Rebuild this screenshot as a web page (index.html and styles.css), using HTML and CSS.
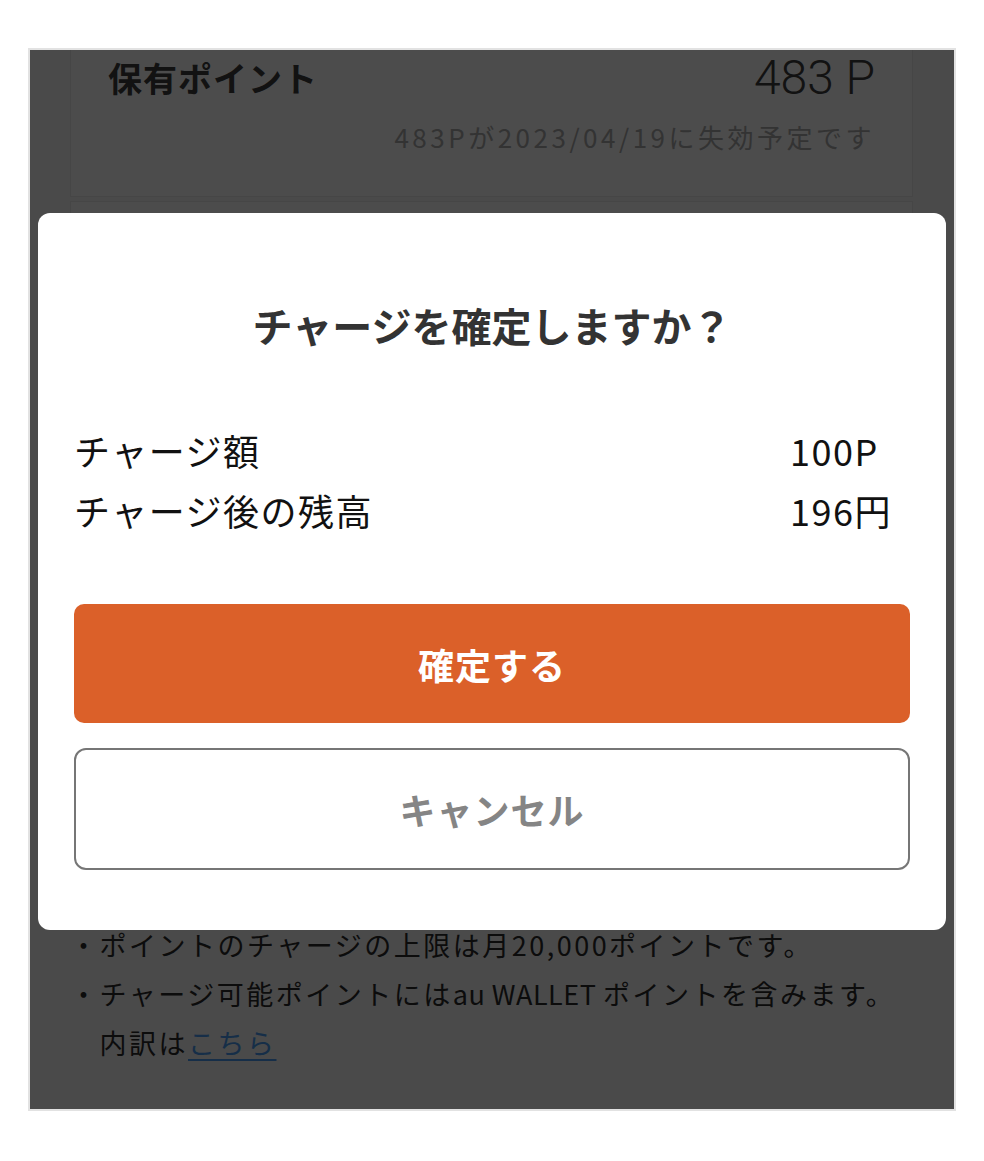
FILE: index.html
```html
<!DOCTYPE html>
<html lang="ja">
<head>
<meta charset="utf-8">
<title>チャージ確認</title>
<link rel="stylesheet" href="styles.css">
</head>
<body>
<div class="screen">
  <div class="page">
    <section class="card card-points">
      <div class="points-row">
        <span class="points-label">保有ポイント</span>
        <span class="points-value">483 P</span>
      </div>
      <p class="points-expire">483Pが2023/04/19に失効予定です</p>
    </section>
    <section class="card card-form"></section>
    <ul class="notes">
      <li>・ポイントのチャージの上限は月20,000ポイントです。</li>
      <li>・チャージ可能ポイントには<span class="latin">au WALLET </span>ポイントを含みます。<br>内訳は<a class="notes-link" href="#">こちら</a></li>
    </ul>
  </div>
  <div class="overlay">
    <div class="modal" role="dialog">
      <h2 class="modal-title">チャージを確定しますか？</h2>
      <div class="summary">
        <div class="summary-row"><span>チャージ額</span><span>100P</span></div>
        <div class="summary-row"><span>チャージ後の残高</span><span>196円</span></div>
      </div>
      <button class="btn btn-primary" type="button">確定する</button>
      <button class="btn btn-secondary" type="button">キャンセル</button>
    </div>
  </div>
</div>
</body>
</html>
```
FILE: styles.css
```css
* { box-sizing: border-box; }

body {
  margin: 0;
  background: #ffffff;
  font-family: "Noto Sans CJK JP", "Noto Sans", sans-serif;
  color: #333;
}

.screen {
  position: relative;
  margin: 48px 0 0 28px;
  width: 928px;
  height: 1063px;
  border: 2px solid #e2e2e2;
  background: #f7f7f8;
  overflow: hidden;
}

.page {
  padding: 0 41px 0 40px;
}

.card {
  background: #ffffff;
  border: 1px solid #ebebeb;
}

.card-points {
  border-top: none;
  padding: 0 37px 39px;
}

.points-row {
  display: flex;
  justify-content: space-between;
  align-items: flex-start;
  height: 56px;
}

.points-label {
  font-size: 34px;
  line-height: 56px;
  font-weight: 700;
  letter-spacing: 1px;
  color: #3c3c3c;
}

.points-value {
  font-family: Roboto, "Noto Sans CJK JP", sans-serif;
  font-size: 48px;
  line-height: 56px;
  font-weight: 300;
  color: #3c3c3c;
}

.points-expire {
  margin: 11px 0 0;
  text-align: right;
  font-size: 26px;
  line-height: 40px;
  letter-spacing: 3.5px;
  color: #ababab;
}

.card-form {
  margin-top: 4px;
  height: 700px;
}

.notes {
  list-style: none;
  margin: 19px 0 0;
  padding: 0;
  font-size: 27px;
  line-height: 49px;
  letter-spacing: 2.5px;
  color: #2b2b2b;
}

.notes li {
  white-space: nowrap;
  padding-left: 29.5px;
  text-indent: -29.5px;
}

.latin {
  letter-spacing: 0.5px;
}

.notes-link {
  color: #4a9cf0;
  text-decoration: underline;
  text-underline-offset: 5px;
}

.overlay {
  position: absolute;
  inset: 0;
  background: rgba(0, 0, 0, 0.7);
  padding: 163px 8px 0;
}

.modal {
  background: #ffffff;
  border-radius: 12px;
  padding: 85px 36px 60px;
}

.modal-title {
  margin: 0;
  text-align: center;
  font-size: 40px;
  line-height: 54px;
  font-weight: 700;
  color: #333;
}

.summary {
  margin-top: 68px;
}

.summary-row {
  display: grid;
  grid-template-columns: 1fr 120px;
  font-size: 36px;
  line-height: 60px;
  letter-spacing: 1.5px;
  color: #111;
}

.btn {
  display: flex;
  align-items: center;
  justify-content: center;
  width: 100%;
  padding: 0;
  font: inherit;
  font-size: 36px;
  font-weight: 700;
  letter-spacing: 1px;
  cursor: pointer;
}

.btn-primary {
  margin-top: 64px;
  height: 119px;
  border: none;
  border-radius: 10px;
  background: #db6029;
  color: #ffffff;
}

.btn-secondary {
  margin-top: 25px;
  height: 122px;
  border: 2px solid #767676;
  border-radius: 12px;
  background: #ffffff;
  color: #858585;
}
```
